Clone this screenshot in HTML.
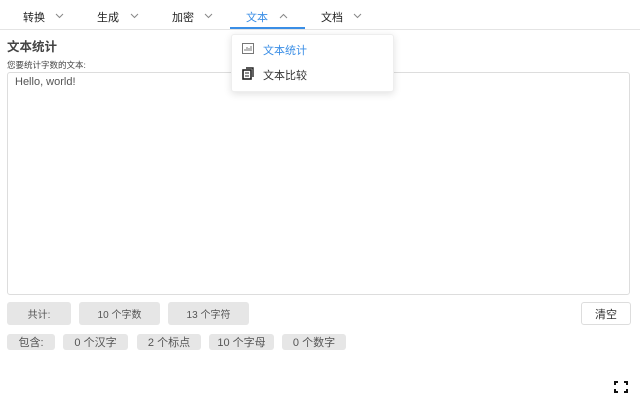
<!DOCTYPE html><html><head><meta charset="utf-8"><style>
body{margin:0;width:640px;height:400px;background:#fff;font-family:"Liberation Sans","Noto Sans CJK SC",sans-serif;position:relative;overflow:hidden;color:#222}
.a{position:absolute}
.tab{position:absolute;top:9px;font-size:11px;color:#222}
.chev{position:absolute;top:13px}
.btn{position:absolute;background:#e6e6e6;border-radius:3px;font-size:10px;color:#555;display:flex;align-items:center;justify-content:center}
</style></head><body>
<div class="tab" style="left:23px">转换</div>
<div class="tab" style="left:97px">生成</div>
<div class="tab" style="left:172px">加密</div>
<div class="tab" style="left:246px;color:#3a8ee6">文本</div>
<div class="tab" style="left:321px">文档</div>
<svg class="chev" style="left:55px" width="9" height="6"><path d="M1 1L4.5 4.5L8 1" fill="none" stroke="#888"/></svg>
<svg class="chev" style="left:130px" width="9" height="6"><path d="M1 1L4.5 4.5L8 1" fill="none" stroke="#888"/></svg>
<svg class="chev" style="left:204px" width="9" height="6"><path d="M1 1L4.5 4.5L8 1" fill="none" stroke="#888"/></svg>
<svg class="chev" style="left:279px" width="9" height="6"><path d="M1 5L4.5 1.5L8 5" fill="none" stroke="#888"/></svg>
<svg class="chev" style="left:353px" width="9" height="6"><path d="M1 1L4.5 4.5L8 1" fill="none" stroke="#888"/></svg>
<div class="a" style="left:0;top:29px;width:640px;height:1px;background:#e4e4e4"></div>
<div class="a" style="left:230px;top:27px;width:75px;height:2px;background:#3a8ee6"></div>
<div class="a" style="left:7px;top:36px;font-size:12.5px;font-weight:bold;color:#444">文本统计</div>
<div class="a" style="left:7px;top:59px;font-size:8.5px;color:#444">您要统计字数的文本:</div>
<div class="a" style="left:7px;top:72px;width:621px;height:221px;border:1px solid #ddd;border-radius:3px"></div>
<div class="a" style="left:15px;top:76px;font-size:11px;color:#555">Hello, world!</div>
<div class="btn" style="left:7px;top:302px;width:64px;height:23px">共计:</div>
<div class="btn" style="left:79px;top:302px;width:81px;height:23px">10 个字数</div>
<div class="btn" style="left:168px;top:302px;width:81px;height:23px">13 个字符</div>
<div class="btn" style="left:581px;top:302px;width:48px;height:21px;background:#fff;border:1px solid #ddd;color:#333;font-size:11px">清空</div>
<div class="btn" style="left:7px;top:334px;width:48px;height:16px;font-size:11px">包含:</div>
<div class="btn" style="left:63px;top:334px;width:65px;height:16px;font-size:11px">0 个汉字</div>
<div class="btn" style="left:137px;top:334px;width:64px;height:16px;font-size:11px">2 个标点</div>
<div class="btn" style="left:209px;top:334px;width:65px;height:16px;font-size:11px">10 个字母</div>
<div class="btn" style="left:282px;top:334px;width:64px;height:16px;font-size:11px">0 个数字</div>
<svg class="a" style="left:614px;top:381px" width="14" height="12" viewBox="0 0 14 12"><path d="M1 4V1H4M10 1H13V4M13 8V11H10M4 11H1V8" fill="none" stroke="#111" stroke-width="2"/></svg>
<div class="a" style="left:231px;top:34px;width:161px;height:56px;background:#fff;border:1px solid #eee;border-radius:3px;box-shadow:0 2px 8px rgba(0,0,0,.12)"></div>
<svg class="a" style="left:242px;top:43px" width="12" height="11" viewBox="0 0 12 11"><rect x="0.5" y="0.5" width="11" height="10" fill="none" stroke="#777"/><path d="M3 8V6M5 8V4M7 8V5M9 8V3" stroke="#777"/></svg>
<div class="a" style="left:263px;top:42px;font-size:11px;color:#3a8ee6">文本统计</div>
<svg class="a" style="left:242px;top:67px" width="12" height="13" viewBox="0 0 12 13"><rect x="1" y="3" width="8" height="9" fill="none" stroke="#222" stroke-width="1.6"/><path d="M4 1H11V10" fill="none" stroke="#222" stroke-width="1.4"/><path d="M3 6H7M3 9H7" stroke="#222"/></svg>
<div class="a" style="left:263px;top:67px;font-size:11px;color:#333">文本比较</div>
</body></html>
